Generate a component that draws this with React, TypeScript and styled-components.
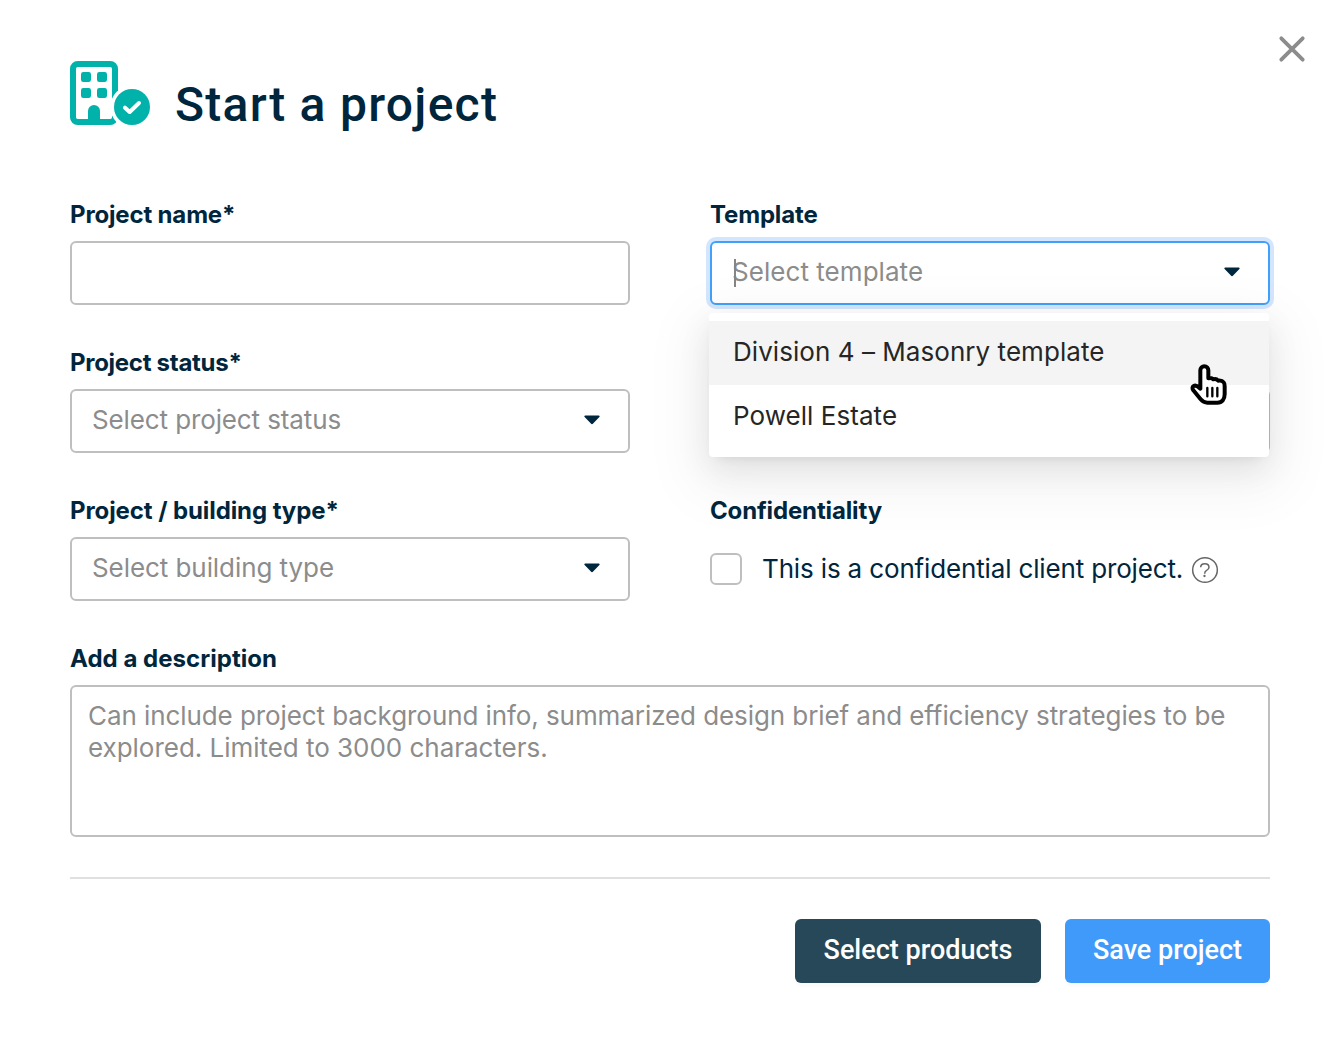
import React from "react";
import styled, { createGlobalStyle, css } from "styled-components";

const ink = "#00263d";
const muted = "#8c8c8c";
const line = "#bfbfbf";

const GlobalStyle = createGlobalStyle`
  *, *::before, *::after { box-sizing: border-box; }
  body { margin: 0; background: #fff; font-family: Inter, "Liberation Sans", sans-serif; color: ${ink}; }
`;

const Modal = styled.main`
  position: relative;
  width: 1343px;
  height: 1059px;
  padding: 61px 73px 0 70px;
  background: #fff;
  overflow: hidden;
`;

const CloseButton = styled.button`
  position: absolute;
  top: 35px;
  right: 37px;
  width: 28px;
  height: 28px;
  padding: 0;
  border: 0;
  background: none;
  svg { display: block; }
`;

const Header = styled.header`
  display: flex;
  align-items: flex-start;
  gap: 24px;
  height: 140px;
`;

const Title = styled.h1`
  margin: 16px 0 0;
  font: 500 48px/56px Roboto, sans-serif;
  letter-spacing: 1.27px;
  white-space: nowrap;
`;

const Form = styled.form`
  display: grid;
  grid-template-columns: 560px 560px;
  column-gap: 80px;
  row-gap: 44px;
`;

const Field = styled.div<{ $wide?: boolean }>`
  position: relative;
  display: flex;
  flex-direction: column;
  justify-content: flex-end;
  gap: 12px;
  ${(p) => p.$wide && css`grid-column: 1 / -1;`}
`;

const Label = styled.label<{ $spacing: number }>`
  font-size: 24px;
  font-weight: 700;
  line-height: 28px;
  letter-spacing: ${(p) => p.$spacing}px;
  white-space: nowrap;
`;

const Control = styled.div<{ $focused?: boolean }>`
  display: flex;
  align-items: center;
  justify-content: space-between;
  height: 64px;
  padding: 0 28px 3px 20px;
  border: 2px solid ${(p) => (p.$focused ? "#40a0fa" : line)};
  border-radius: 6px;
  background: #fff;
  ${(p) => p.$focused && css`box-shadow: 0 0 0 4px #d3e6fd;`}
`;

const Placeholder = styled.span<{ $spacing: number }>`
  position: relative;
  color: ${muted};
  font-size: 26px;
  line-height: 32px;
  letter-spacing: ${(p) => p.$spacing}px;
  white-space: nowrap;
`;

const TextCursor = styled.i`
  position: absolute;
  left: 2px;
  top: 3px;
  width: 2px;
  height: 28px;
  background: #858585;
`;

const Menu = styled.ul`
  position: absolute;
  z-index: 2;
  top: 112px;
  left: -1px;
  width: 560px;
  margin: 0;
  padding: 8px 0;
  list-style: none;
  border-radius: 4px;
  background: #fff;
  box-shadow:
    0 6px 12px -8px rgba(0, 0, 0, 0.12),
    0 12px 32px 0 rgba(0, 0, 0, 0.08),
    0 18px 56px 16px rgba(0, 0, 0, 0.05);
`;

const Option = styled.li<{ $active?: boolean; $spacing: number }>`
  height: 64px;
  padding-left: 24px;
  color: #262626;
  background: ${(p) => (p.$active ? "#f4f4f4" : "transparent")};
  font-size: 26px;
  line-height: 61px;
  letter-spacing: ${(p) => p.$spacing}px;
  white-space: nowrap;
`;

const Pointer = styled.svg`
  position: absolute;
  z-index: 3;
  top: 162px;
  left: 479px;
`;

const CheckRow = styled.div`
  display: flex;
  align-items: center;
  height: 64px;
`;

const Checkbox = styled.span`
  width: 32px;
  height: 32px;
  margin-right: 20px;
  border: 2px solid ${line};
  border-radius: 6px;
  background: #fff;
`;

const CheckText = styled.span`
  margin-right: 8px;
  font-size: 26px;
  line-height: 32px;
  letter-spacing: -0.15px;
  white-space: nowrap;
`;

const HelpBadge = styled.svg`
  margin-top: 2px;
`;

const TextArea = styled.div`
  height: 152px;
  padding: 13px 16px;
  border: 2px solid ${line};
  border-radius: 6px;
  display: flex;
  flex-direction: column;
`;

const Footer = styled.footer`
  display: flex;
  justify-content: flex-end;
  gap: 24px;
  margin-top: 40px;
  padding-top: 40px;
  border-top: 2px solid #e0e0e0;
`;

const Button = styled.button<{ $tone: string; $width: number }>`
  width: ${(p) => p.$width}px;
  height: 64px;
  padding: 0 0 2px;
  border: 0;
  border-radius: 6px;
  color: #fff;
  background: ${(p) => p.$tone};
  box-shadow: 0 4px 0 rgba(0, 0, 0, 0.016);
  font: 500 27px/32px Roboto, sans-serif;
  letter-spacing: 0;
  white-space: nowrap;
`;

const Caret = () => (
  <svg width="16" height="10" viewBox="0 0 16 10">
    <path d="M1.3 0.4h13.4c.9 0 1.3.9.7 1.5L9.1 8.6c-.6.7-1.6.7-2.2 0L.6 1.9C0 1.3.4.4 1.3.4z" fill={ink} />
  </svg>
);

const BuildingIcon = () => (
  <svg width="81" height="65" viewBox="30 33 243 195">
    <rect x="39" y="42" width="126" height="174" rx="14" fill="none" stroke="#00b2a9" strokeWidth="18" />
    <g fill="#00b2a9">
      <rect x="63" y="66" width="30" height="30" rx="7" />
      <rect x="111" y="66" width="30" height="30" rx="7" />
      <rect x="63" y="114" width="30" height="30" rx="7" />
      <rect x="111" y="114" width="30" height="30" rx="7" />
      <path d="M84 210v-27a18 18 0 0 1 36 0v27z" />
    </g>
    <circle cx="216" cy="171" r="65" fill="#fff" />
    <circle cx="216" cy="171" r="54" fill="#00b2a9" />
    <path d="M195 173l14 13 28-27" fill="none" stroke="#fff" strokeWidth="12" strokeLinecap="round" strokeLinejoin="round" />
  </svg>
);

const HelpIcon = () => (
  <HelpBadge width="28" height="28" viewBox="393 48 84 84">
    <circle cx="435" cy="90" r="37" fill="none" stroke="#666" strokeWidth="4.500" />
    <path d="M422 82c0-7 5-11 12.500-11s12.500 4 12.500 11c0 6-4 8-8 10s-5 4-5 9" fill="none" stroke="#666" strokeWidth="4.500" />
    <circle cx="433.500" cy="108" r="3.500" fill="#666" />
  </HelpBadge>
);

function Select({ label, spacing, text, textSpacing }: { label: string; spacing: number; text: string; textSpacing: number }) {
  return (
    <Field>
      <Label $spacing={spacing}>{label}</Label>
      <Control>
        <Placeholder $spacing={textSpacing}>{text}</Placeholder>
        <Caret />
      </Control>
    </Field>
  );
}

export default function App() {
  return (
    <>
      <GlobalStyle />
      <Modal>
        <CloseButton type="button">
          <svg width="28" height="28" viewBox="0 0 28 28">
            <path d="M3.300 3.300l21.400 21.400M24.700 3.300L3.300 24.700" stroke={muted} strokeWidth="3.800" strokeLinecap="round" />
          </svg>
        </CloseButton>
        <Header>
          <BuildingIcon />
          <Title>Start a project</Title>
        </Header>
        <Form>
          <Field>
            <Label $spacing={-0.16}>Project name*</Label>
            <Control />
          </Field>
          <Field>
            <Label $spacing={-0.15}>Template</Label>
            <Control $focused>
              <Placeholder $spacing={0.05}>
                <TextCursor />
                Select template
              </Placeholder>
              <Caret />
            </Control>
            <Menu>
              <Option $active $spacing={0.05}>Division 4 – Masonry template</Option>
              <Option $spacing={0.05}>Powell Estate</Option>
            </Menu>
            <Pointer width="40" height="44" viewBox="27 39 120 132">
              <path
                d="M61 116V61a12 12 0 0 1 24 0v24c6-2 12 0 15 3 6-2 11 0 14 4 8-1 14 1 17 5 3 3 3 7 3 12v24c0 15-8 25-22 25H82c-9 0-15-4-20-10l-22-27c-4-6-3-11 1-13 6-3 12 1 16 5z"
                fill="#fff"
                stroke="#000"
                strokeWidth="12"
                strokeLinejoin="round"
              />
              <path d="M82 114v25M97 114v25M112 114v25" stroke="#000" strokeWidth="7" strokeLinecap="round" />
            </Pointer>
          </Field>
          <Select label="Project status*" spacing={-0.28} text="Select project status" textSpacing={-0.12} />
          <Field>
            <Control />
          </Field>
          <Select label="Project / building type*" spacing={-0.09} text="Select building type" textSpacing={-0.07} />
          <Field>
            <Label $spacing={-0.14}>Confidentiality</Label>
            <CheckRow>
              <Checkbox />
              <CheckText>This is a confidential client project.</CheckText>
              <HelpIcon />
            </CheckRow>
          </Field>
          <Field $wide>
            <Label $spacing={0.03}>Add a description</Label>
            <TextArea>
              <Placeholder $spacing={-0.08}>
                Can include project background info, summarized design brief and efficiency strategies to be
              </Placeholder>
              <Placeholder $spacing={-0.03}>explored. Limited to 3000 characters.</Placeholder>
            </TextArea>
          </Field>
        </Form>
        <Footer>
          <Button type="button" $tone="#264858" $width={246}>Select products</Button>
          <Button type="button" $tone="#409afa" $width={205}>Save project</Button>
        </Footer>
      </Modal>
    </>
  );
}
